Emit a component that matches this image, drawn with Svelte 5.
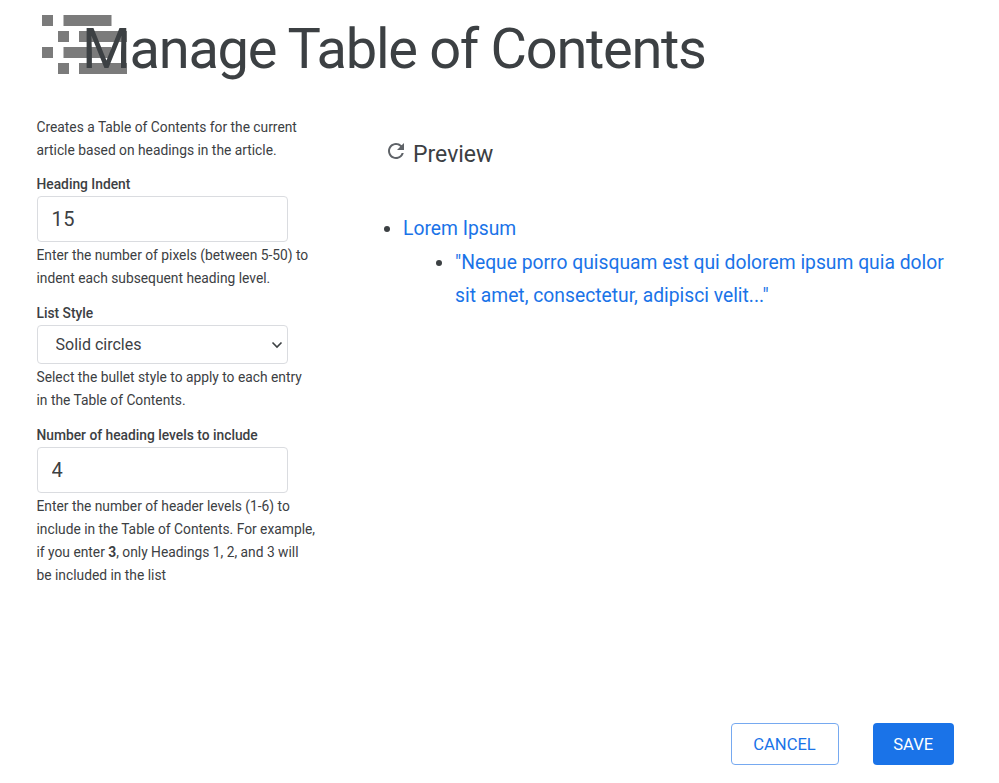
<script>
	let indent = $state(15);
	let levels = $state(4);
	let listStyle = $state('Solid circles');
</script>

<main class="page">
	<header class="head">
		<svg class="logo" width="86" height="60" viewBox="0 0 86 60" aria-hidden="true">
			<rect x="0" y="0" width="11" height="11" />
			<rect x="21.500" y="0" width="48" height="11" />
			<rect x="16" y="16" width="11" height="11" />
			<rect x="37" y="16" width="48" height="11" />
			<rect x="0" y="32" width="11" height="11" />
			<rect x="21.500" y="32" width="48" height="11" />
			<rect x="16" y="48" width="11" height="11" />
			<rect x="37" y="48" width="48" height="11" />
		</svg>
		<h1>Manage Table of Contents</h1>
	</header>

	<div class="columns">
		<section class="form">
			<p class="intro">Creates a Table of Contents for the current article based on headings in the article.</p>

			<label for="indent">Heading Indent</label>
			<input id="indent" type="text" bind:value={indent} />
			<p class="hint">Enter the number of pixels (between 5-50) to indent each subsequent heading level.</p>

			<label for="style">List Style</label>
			<div class="select">
				<select id="style" bind:value={listStyle}>
					<option>Solid circles</option>
					<option>Hollow circles</option>
					<option>Squares</option>
				</select>
				<svg width="12" height="8" viewBox="0 0 12 8" aria-hidden="true">
					<path d="M1.500 1.500 6 6l4.500-4.500" fill="none" stroke="#3c4043" stroke-width="1.600" />
				</svg>
			</div>
			<p class="hint">Select the bullet style to apply to each entry in the Table of Contents.</p>

			<label for="levels">Number of heading levels to include</label>
			<input id="levels" type="text" bind:value={levels} />
			<p class="hint">Enter the number of header levels (1-6) to include in the Table of Contents. For example, if you enter <b>3</b>, only Headings 1, 2, and 3 will be included in the list</p>
		</section>

		<section class="preview">
			<button class="refresh" type="button">
				<svg width="24" height="24" viewBox="0 0 24 24" aria-hidden="true">
					<path fill="#5f6368" d="M17.650 6.350A7.958 7.958 0 0 0 12 4c-4.420 0-7.990 3.580-7.990 8s3.570 8 7.990 8c3.730 0 6.840-2.550 7.730-6h-2.080A5.990 5.990 0 0 1 12 18c-3.310 0-6-2.690-6-6s2.690-6 6-6c1.660 0 3.140.690 4.220 1.780L13 11h7V4l-2.350 2.350z" />
				</svg>
				<span>Preview</span>
			</button>
			<ul class="toc">
				<li>
					<a href="#lorem">Lorem Ipsum</a>
					<ul>
						<li><a href="#neque">"Neque porro quisquam est qui dolorem ipsum quia dolor sit amet, consectetur, adipisci velit..."</a></li>
					</ul>
				</li>
			</ul>
		</section>
	</div>

	<footer class="actions">
		<button class="btn cancel" type="button">CANCEL</button>
		<button class="btn save" type="button">SAVE</button>
	</footer>
</main>

<style>
	:global(body) {
		background: #fff;
		font-family: Roboto, "Liberation Sans", sans-serif;
		color: #3c4043;
	}

	.page {
		position: relative;
		width: 999px;
		height: 783px;
		display: flex;
		flex-direction: column;
		box-sizing: border-box;
		overflow: hidden;
	}

	.head {
		position: relative;
		height: 115.500px;
		padding-left: 82px;
		box-sizing: border-box;
	}

	.logo {
		position: absolute;
		left: 42px;
		top: 14.500px;
	}
	.logo rect {
		fill: #7b7b7b;
	}

	h1 {
		position: relative;
		margin: 0;
		padding-top: 13px;
		font-family: Roboto, sans-serif;
		font-size: 56px;
		font-weight: 400;
		letter-spacing: -1.300px;
		line-height: 72px;
		white-space: nowrap;
		color: #3c4043;
	}

	.columns {
		display: flex;
		flex: 1;
	}

	.form {
		width: 282px;
		margin-left: 36.500px;
		font-size: 13.800px;
		line-height: 23px;
	}

	p {
		margin: 0;
	}

	.intro {
		margin-bottom: 11px;
	}

	label {
		display: block;
		font-weight: 500;
		line-height: 23px;
		color: #3c4043;
	}

	input,
	.select {
		display: block;
		box-sizing: border-box;
		width: 251.500px;
		border: 1px solid #dadce0;
		border-radius: 4px;
		background: #fff;
		color: #3c4043;
	}

	input {
		height: 46px;
		padding: 0 14px;
		font: 400 20px Roboto, sans-serif;
		letter-spacing: 0.5px;
		outline: none;
	}

	.select {
		position: relative;
		height: 39px;
	}
	.select select {
		width: 100%;
		height: 100%;
		padding: 0 18px;
		border: 0;
		background: transparent;
		appearance: none;
		font: 400 16px Roboto, sans-serif;
		color: #3c4043;
		outline: none;
	}
	.select svg {
		position: absolute;
		right: 4px;
		top: 15px;
		pointer-events: none;
	}

	.hint {
		margin-top: 2.500px;
		margin-bottom: 11.500px;
		width: 279.300px;
	}

	.preview {
		margin-left: 65.500px;
		flex: 1;
		min-width: 0;
	}

	.refresh {
		display: flex;
		align-items: flex-start;
		gap: 5px;
		margin-top: 22.500px;
		padding: 0;
		border: 0;
		background: none;
		font-family: Roboto, sans-serif;
		font-size: 23px;
		line-height: 30px;
		color: #3c4043;
	}
	.refresh svg {
		margin-top: 1px;
	}
	.refresh span {
		margin-top: 2px;
	}

	.toc {
		margin: 42px 0 0;
		padding: 0 0 0 19px;
		font-size: 19.300px;
		line-height: 33.500px;
		width: 565px;
		box-sizing: border-box;
	}
	.toc ul {
		margin: 0;
		padding-left: 52px;
	}
	.toc li::marker {
		color: #3c4043;
	}
	.toc ul li {
		list-style: disc;
	}
	.toc a {
		color: #1a73e8;
		text-decoration: none;
	}

	.actions {
		position: absolute;
		right: 45px;
		bottom: 18px;
		display: flex;
		gap: 34px;
	}

	.btn {
		height: 42px;
		box-sizing: border-box;
		border-radius: 4px;
		font-family: Roboto, sans-serif;
		font-size: 16.600px;
		font-weight: 400;
	}
	.cancel {
		width: 108px;
		border: 1px solid #76a9f0;
		background: #fff;
		color: #1a73e8;
	}
	.save {
		width: 81.500px;
		border: 0;
		background: #1a73e8;
		color: #fff;
	}
</style>
